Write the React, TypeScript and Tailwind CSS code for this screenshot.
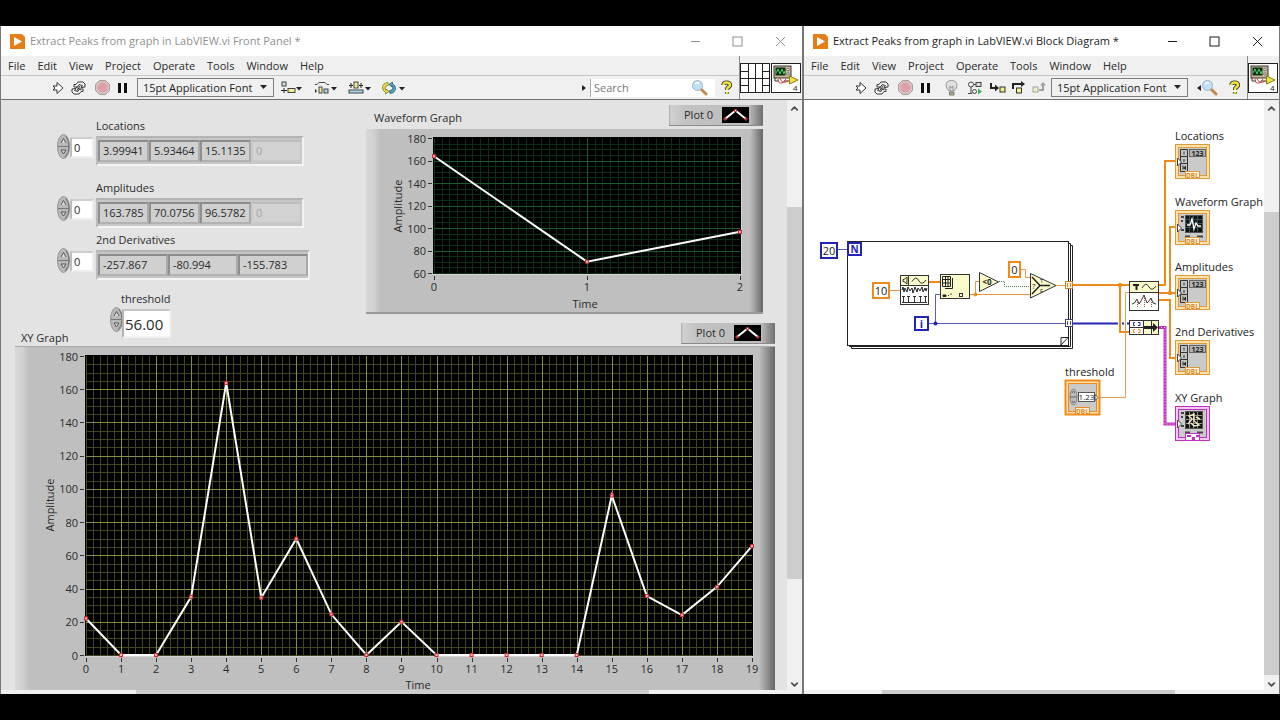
import { useState } from 'react'
import type { ReactNode } from 'react'
import { ChevronDown, ChevronUp } from 'lucide-react'

const MENU_ITEMS = ['File', 'Edit', 'View', 'Project', 'Operate', 'Tools', 'Window', 'Help']

const XY_VALUES = [22, 0, 0, 35, 163.8, 34.5, 70, 24.5, 0, 20, 0, 0, 0, 0, 0, 96, 35.5, 24, 41, 65.5]
const WAVE_VALUES = [163.785, 70.0756, 96.5782]

/* ---------- window chrome ---------- */

function LabviewLogo() {
  return (
    <svg width="15" height="15" viewBox="0 0 15 15" aria-hidden="true">
      <path d="M0 0H12L15 3V15H0Z" fill="#e67e17" />
      <path d="M4 3L12 7.5L4 12Z" fill="#fff" />
    </svg>
  )
}

function TitleBar({ title, active }: { title: string; active: boolean }) {
  return (
    <div
      className={`flex h-[30px] shrink-0 items-center bg-white pl-[9px] ${active ? 'text-[#1c1c1c]' : 'text-[#8f8f8f]'}`}
    >
      <LabviewLogo />
      <h1 className="ml-[5px] flex-1 truncate">{title}</h1>
      <button type="button" aria-label="Minimize" className="flex w-[42px] justify-center">
        <svg width="11" height="11" viewBox="0 0 11 11" stroke="currentColor">
          <path d="M1 5.5H10" />
        </svg>
      </button>
      <button type="button" aria-label="Maximize" className="flex w-[42px] justify-center">
        <svg width="11" height="11" viewBox="0 0 11 11" stroke="currentColor" fill="none">
          <rect x="1" y="1" width="9" height="9" />
        </svg>
      </button>
      <button type="button" aria-label="Close" className="flex w-[44px] justify-center">
        <svg width="11" height="11" viewBox="0 0 11 11" stroke="currentColor">
          <path d="M1 1L10 10M10 1L1 10" />
        </svg>
      </button>
    </div>
  )
}

function MenuBar() {
  return (
    <nav className="flex h-5 items-center gap-3 border-b border-[#c6c6c6] pl-[7px]">
      {MENU_ITEMS.map((item) => (
        <button key={item} type="button">
          {item}
        </button>
      ))}
    </nav>
  )
}

interface ToolProps {
  label: string
  className: string
  children: ReactNode
}

function Tool({ label, className, children }: ToolProps) {
  return (
    <button type="button" aria-label={label} className={`flex h-full shrink-0 items-center justify-center ${className}`}>
      {children}
    </button>
  )
}

function RunTools() {
  return (
    <>
      <Tool label="Run" className="ml-[47px] w-5">
        <svg width="12" height="14" viewBox="0 0 12 14" fill="#fff" stroke="#333">
          <path d="M1 5H5V1.500L11 7L5 12.500V9H1L3 7Z" />
        </svg>
      </Tool>
      <Tool label="Run continuously" className="w-5">
        <svg width="15" height="14" viewBox="0 0 15 14" fill="#fff" stroke="#333">
          <path d="M3 6V3.500H5L7 1H12L14 3V6L10 6.500L11.500 4.500L8 3.500L6.500 6Z" />
          <path d="M12 8V10.500H10L8 13H3L1 11V8L5 7.500L3.500 9.500L7 10.500L8.500 8Z" />
          <path d="M5 6L10 9M9 5L6 9.500" />
        </svg>
      </Tool>
      <Tool label="Abort execution" className="w-7">
        <svg width="15" height="15" viewBox="0 0 15 15">
          <path d="M4.500 .5H10.500L14.500 4.500V10.500L10.500 14.500H4.500L.5 10.500V4.500Z" fill="#d3c4c4" stroke="#a89c9c" />
          <circle cx="7.500" cy="7.500" r="5" fill="#df9fa4" />
        </svg>
      </Tool>
      <Tool label="Pause" className="w-3">
        <svg width="9" height="10" viewBox="0 0 9 10">
          <path d="M0 0H3V10H0ZM6 0H9V10H6Z" fill="#111" />
        </svg>
      </Tool>
    </>
  )
}

function FontSelect({ className }: { className: string }) {
  return (
    <div className={`relative h-[19px] w-[137px] shrink-0 ${className}`}>
      <select
        aria-label="Text settings"
        className="block h-full w-full appearance-none border border-[#7d7d7d] bg-[#f0f0f0] pl-[5px] text-[#222]"
      >
        <option>15pt Application Font</option>
      </select>
      <svg className="pointer-events-none absolute top-[7px] right-[7px]" width="7" height="4" viewBox="0 0 7 4">
        <path d="M0 0H7L3.500 4Z" fill="#222" />
      </svg>
    </div>
  )
}

function Caret({ x }: { x: number }) {
  return <path d={`M${x} 6H${x + 6}L${x + 3} 9.500Z`} fill="#222" />
}

function ArrangeTools() {
  return (
    <>
      <Tool label="Align objects" className="w-[34px]">
        <svg width="23" height="14" viewBox="0 0 23 14">
          <rect x="2" y="1" width="4" height="4" fill="#cfe3e8" stroke="#444" />
          <path d="M4 7V12M1 9.500H7" stroke="#222" />
          <rect x="8" y="7.500" width="7" height="4" fill="#f4ee8c" stroke="#444" />
          <Caret x={16} />
        </svg>
      </Tool>
      <Tool label="Distribute objects" className="w-[34px]">
        <svg width="23" height="14" viewBox="0 0 23 14">
          <path d="M1 3.500H3L5 1.500H11L13 3.500H15" fill="none" stroke="#444" />
          <path d="M1 8L3 10L1 12Z" fill="#222" />
          <rect x="5" y="6" width="3" height="6" fill="#f4ee8c" stroke="#444" />
          <rect x="10" y="8" width="4" height="4" fill="#a9d8e8" stroke="#444" />
          <Caret x={17} />
        </svg>
      </Tool>
      <Tool label="Resize objects" className="w-[34px]">
        <svg width="23" height="14" viewBox="0 0 23 14">
          <path d="M1 4.500H5M11 4.500H15M3 2V7M13 2V7" stroke="#222" />
          <rect x="6" y="1" width="4" height="6" fill="#f4ee8c" stroke="#444" />
          <rect x="1" y="9" width="14" height="3" fill="#a9d8e8" stroke="#444" />
          <Caret x={17} />
        </svg>
      </Tool>
      <Tool label="Reorder" className="w-[34px]">
        <svg width="24" height="14" viewBox="0 0 24 14">
          <path
            d="M7 1.500L3.500 2.500L1.500 5.500L2 9L4.500 11.500V13L8 10.500L5 8V9.200L4 7L5.200 5L7.500 4.200Z"
            fill="#f0e040"
            stroke="#7a7420"
            strokeWidth=".8"
          />
          <path
            d="M9 12.500L12.500 11.500L14.500 8.500L14 5L11.500 2.500V1L8 3.500L11 6V4.800L12 7L10.800 9L8.500 9.800Z"
            fill="#4aa8c8"
            stroke="#245a70"
            strokeWidth=".8"
          />
          <Caret x={18} />
        </svg>
      </Tool>
    </>
  )
}

function Magnifier() {
  return (
    <svg width="17" height="17" viewBox="0 0 17 17" aria-hidden="true">
      <path d="M10 10L15 15" stroke="#c48a48" strokeWidth="3" strokeLinecap="round" />
      <circle cx="6.500" cy="6.500" r="5" fill="#bfe0f5" stroke="#9fb4c4" />
      <path d="M4 5Q5.500 3 8 4" stroke="#fff" strokeWidth="1.500" fill="none" />
    </svg>
  )
}

function HelpTool() {
  return (
    <Tool label="Show context help" className="w-6">
      <svg width="12" height="15" viewBox="0 0 12 15">
        <path
          d="M2.500 5Q2.500 2.500 5.500 2.500Q9 2.500 9 5Q9 6.500 7 7.500Q6 8.200 6 10M6 12V13.500"
          fill="none"
          stroke="#333"
          strokeWidth="4.200"
        />
        <path
          d="M2.500 5Q2.500 2.500 5.500 2.500Q9 2.500 9 5Q9 6.500 7 7.500Q6 8.200 6 10M6 12V13.500"
          fill="none"
          stroke="#f2e632"
          strokeWidth="2.600"
        />
      </svg>
    </Tool>
  )
}

function ConnectorPane() {
  return (
    <svg width="30" height="30" viewBox="0 0 30 30" fill="#fff" stroke="#222" aria-hidden="true">
      <rect x=".5" y=".5" width="29" height="29" />
      <path d="M8.500 0V30M15.500 0V30M22.500 0V30M0 15.500H30" />
      <path d="M0 8.500H8M0 22.500H8M22 8.500H30M22 22.500H30" />
    </svg>
  )
}

function ViIcon() {
  return (
    <svg width="30" height="30" viewBox="0 0 30 30" aria-hidden="true">
      <rect x=".5" y=".5" width="29" height="29" fill="#fff" stroke="#222" />
      <rect x="3" y="3" width="17" height="12" fill="#c9b896" stroke="#333" />
      <rect x="4.500" y="4.500" width="10" height="8" fill="#103018" />
      <path d="M5 10L7 6L9 11L11 6L13 11L14 8" stroke="#4fd06a" fill="none" />
      <circle cx="17" cy="6.500" r="1.200" fill="#fff" stroke="#333" strokeWidth=".6" />
      <circle cx="17" cy="11" r="1.200" fill="#fff" stroke="#333" strokeWidth=".6" />
      <path d="M4 15V18H8M13 18H18" stroke="#333" fill="none" />
      <path d="M7 16Q7 21 11 20Q14 18 15 16M9 15Q11 22 17 18" stroke="#c8423c" fill="none" />
      <path d="M18.500 13L27 17L18.500 21Z" fill="#f3e33a" stroke="#8a7a14" />
      <text x="22" y="28" fontSize="8" fill="#222">
        4
      </text>
    </svg>
  )
}

function ToolHeader({ tools, icons }: { tools: ReactNode; icons: ReactNode }) {
  return (
    <div className="flex shrink-0 border-b border-[#6f6f6f] bg-[#f0f0f0]">
      <div className="min-w-0 flex-1">
        <MenuBar />
        <div className="flex h-[23px] items-center">{tools}</div>
      </div>
      <div className="flex items-center gap-px border-l border-[#8a8a8a] pr-px">{icons}</div>
    </div>
  )
}

interface ScrollAreaProps {
  children: ReactNode
  canvasClass: string
  before: string
  thumb: string
  after: string
  hBefore: string
  hThumb: string
  hAfter: string
}

function ScrollArea({ children, canvasClass, before, thumb, after, hBefore, hThumb, hAfter }: ScrollAreaProps) {
  return (
    <>
      <div className="flex min-h-0 flex-1">
        <div className={`min-w-0 flex-1 overflow-hidden ${canvasClass}`}>{children}</div>
        <div className="flex w-[15px] shrink-0 flex-col bg-[#f0f0f0] text-[#505050]">
          <div className={`flex basis-0 justify-center pt-[3px] ${before}`}>
            <ChevronUp size={11} strokeWidth={4} />
          </div>
          <div className={`basis-0 bg-[#cdcdcd] ${thumb}`} />
          <div className={`flex basis-0 items-end justify-center ${after}`}>
            <ChevronDown size={11} strokeWidth={4} />
          </div>
        </div>
      </div>
      <div className="flex h-1 shrink-0 bg-[#f0f0f0]">
        <div className={hBefore} />
        <div className={`bg-[#cdcdcd] ${hThumb}`} />
        <div className={hAfter} />
      </div>
    </>
  )
}

/* ---------- front panel ---------- */

function Spinner({ label }: { label: string }) {
  return (
    <button type="button" aria-label={label} className="shrink-0">
      <svg width="13" height="25" viewBox="0 0 13 25">
        <ellipse cx="6.500" cy="12.500" rx="6" ry="12" fill="#b9b9b9" stroke="#959595" />
        <path d="M9 2Q12 7 12 12.500Q12 19 8 23" stroke="#6f6f6f" fill="none" />
        <path d="M1 12.500H12" stroke="#777" />
        <path d="M4 9L6.500 4.500L9 9M4 16H9L6.500 20Z" stroke="#555" fill="#ddd" />
      </svg>
    </button>
  )
}

interface ArrayIndicatorProps {
  name: string
  values: string[]
  className: string
  cellClass: string
}

function ArrayIndicator({ name, values, className, cellClass }: ArrayIndicatorProps) {
  const [index, setIndex] = useState('0')
  return (
    <div className={className}>
      <h2 className="ml-[39px] leading-4">{name}</h2>
      <div className="flex h-8 items-start">
        <Spinner label={`${name} index step`} />
        <input
          aria-label={`${name} index`}
          value={index}
          onChange={(e) => setIndex(e.target.value)}
          className="mt-[3px] h-[21px] w-6 border-2 border-t-[#cfcfcf] border-r-[#eee] border-b-[#eee] border-l-[#bdbdbd] bg-white pl-[2px]"
        />
        <div className="mt-[2px] ml-[2px] flex h-[30px] border-2 border-t-[#b4b4b4] border-r-[#f2f2f2] border-b-[#f4f4f4] border-l-[#bcbcbc] bg-[#c6c6c6] py-[2px]">
          {values.map((value, i) => (
            <output
              key={i}
              className={`flex items-center border-2 pl-[3px] ${cellClass} ${
                value === '0'
                  ? 'border-[#c9c9c9] border-t-[#bcbcbc] bg-[#d2d2d2] text-[#a5a5a5]'
                  : 'border-t-[#8b8b8b] border-r-[#aaa] border-b-[#b2b2b2] border-l-[#8f8f8f] bg-[#d0d0d0]'
              }`}
            >
              {value}
            </output>
          ))}
        </div>
      </div>
    </div>
  )
}

function ThresholdControl() {
  const [value, setValue] = useState('56.00')
  return (
    <div className="mb-[8px]">
      <label htmlFor="threshold" className="ml-[11px] block leading-4">
        threshold
      </label>
      <div className="flex items-start">
        <Spinner label="threshold step" />
        <input
          id="threshold"
          value={value}
          onChange={(e) => setValue(e.target.value)}
          className="mt-[2px] -ml-px h-[29px] w-[49px] border-2 border-t-[#c4c4c4] border-r-[#f2f2f2] border-b-[#f2f2f2] border-l-[#b4b4b4] bg-white pl-px text-[15px]"
        />
      </div>
    </div>
  )
}

function PlotLegend({ className }: { className: string }) {
  return (
    <div
      className={`flex h-[21px] w-[94px] shrink-0 items-center border-b border-[#8a8a8a] bg-[linear-gradient(to_right,#a8a8a8_0,#d0d0d0_2px,#c2c2c2_16px,#bcbcbc_80px,#6e6e6e_100%)] pl-[15px] ${className}`}
    >
      <span className="w-[38px]">Plot 0</span>
      <svg width="27" height="16" viewBox="0 0 27 16" aria-hidden="true">
        <rect width="27" height="16" fill="#000" />
        <path d="M3 12L13.500 3.500L24 12" stroke="#fff" strokeWidth="2" fill="none" />
        <path d="M2 11h2v2h-2zM12.500 2.500h2v2h-2zM23 11h2v2h-2z" stroke="#c83038" fill="none" />
      </svg>
    </div>
  )
}

interface GraphProps {
  width: number
  height: number
  plot: { x: number; y: number; w: number; h: number }
  values: number[]
  yMin: number
  yMax: number
  xMinor: number
  majorColor: string
  minorColor: string
  yTitle: { x: number; y: number }
  xTitle: { x: number; y: number }
}

function Graph({ width, height, plot, values, yMin, yMax, xMinor, majorColor, minorColor, yTitle, xTitle }: GraphProps) {
  const xMax = values.length - 1
  const px = (v: number) => plot.x + (v / xMax) * plot.w
  const py = (v: number) => plot.y + plot.h - ((v - yMin) / (yMax - yMin)) * plot.h
  const snap = (v: number) => Math.round(v) + 0.5

  const xTicks = values.map((_, i) => i)
  const yTicks = Array.from({ length: (yMax - yMin) / 20 + 1 }, (_, i) => yMin + i * 20)
  const xLines = Array.from({ length: xMax * xMinor }, (_, i) => i / xMinor)
  const yLines = Array.from({ length: (yMax - yMin) / 5 }, (_, i) => yMin + i * 5)

  return (
    <svg viewBox={`0 0 ${width} ${height}`} className="block w-full" fontSize="11" fill="#2b2b2b">
      <rect x={plot.x - 1} y={plot.y - 1} width={plot.w + 2} height={plot.h + 2} fill="#000" />
      {xLines.map((v) => (
        <path key={v} d={`M${snap(px(v))} ${plot.y}V${plot.y + plot.h}`} stroke={minorColor} />
      ))}
      {yLines.map((v) => (
        <path key={v} d={`M${plot.x} ${snap(py(v))}H${plot.x + plot.w}`} stroke={minorColor} />
      ))}
      {xTicks.slice(1, -1).map((v) => (
        <path key={v} d={`M${snap(px(v))} ${plot.y}V${plot.y + plot.h}`} stroke={majorColor} />
      ))}
      {yTicks.slice(1, -1).map((v) => (
        <path key={v} d={`M${plot.x} ${snap(py(v))}H${plot.x + plot.w}`} stroke={majorColor} />
      ))}
      <path
        d={`M${plot.x - 1} ${plot.y + plot.h + 1.5}H${plot.x + plot.w + 1.5}V${plot.y}`}
        stroke="#d4d4d4"
        fill="none"
      />

      <polyline
        points={values.map((v, i) => `${px(i)},${py(v)}`).join(' ')}
        fill="none"
        stroke="#fff"
        strokeWidth="2"
      />
      {values.map((v, i) => (
        <rect key={i} x={px(i) - 1.5} y={py(v) - 1.5} width="3" height="3" fill="#f0b8b8" stroke="#cc2a30" />
      ))}

      {yTicks.map((v) => (
        <g key={v}>
          <path d={`M${plot.x - 6} ${snap(py(v))}h4`} stroke="#333" />
          <text x={plot.x - 8} y={py(v) + 4.5} textAnchor="end">
            {v}
          </text>
        </g>
      ))}
      {xTicks.map((v) => (
        <g key={v}>
          <path d={`M${snap(px(v))} ${plot.y + plot.h + 3}v4`} stroke="#333" />
          <text x={px(v)} y={plot.y + plot.h + 18} textAnchor="middle">
            {v}
          </text>
        </g>
      ))}
      <text transform={`translate(${yTitle.x} ${yTitle.y}) rotate(-90)`} textAnchor="middle">
        Amplitude
      </text>
      <text x={xTitle.x} y={xTitle.y} textAnchor="middle">
        Time
      </text>
    </svg>
  )
}

function FrontPanel() {
  return (
    <section className="flex min-h-0 min-w-0 flex-col border-r-2 border-l border-[#777] bg-white">
      <TitleBar title="Extract Peaks from graph in LabVIEW.vi Front Panel *" active={false} />
      <ToolHeader
        tools={
          <>
            <RunTools />
            <FontSelect className="ml-[9px]" />
            <ArrangeTools />
            <div className="ml-auto flex items-center">
              <svg width="5" height="6" viewBox="0 0 5 6" aria-hidden="true">
                <path d="M0 0L4 3L0 6Z" fill="#222" />
              </svg>
              <div className="ml-[3px] flex h-[18px] items-center border-l border-[#aaa] bg-white pr-[7px]">
                <input
                  aria-label="Search"
                  placeholder="Search"
                  className="w-[100px] pl-[3px] outline-none placeholder:text-[#777]"
                />
                <Magnifier />
              </div>
              <HelpTool />
            </div>
          </>
        }
        icons={
          <>
            <ConnectorPane />
            <ViIcon />
          </>
        }
      />
      <ScrollArea
        canvasClass="bg-[#e3e3e3]"
        before="grow-[105]"
        thumb="grow-[373]"
        after="grow-[112]"
        hBefore="grow-[135]"
        hThumb="grow-[513]"
        hAfter="grow-[153]"
      >
        <div className="flex justify-between">
          <div className="flex flex-col justify-between">
            <div className="pt-[18px] pl-14">
              <ArrayIndicator
                name="Locations"
                className="mb-[14px]"
                cellClass="w-[51px]"
                values={['3.99941', '5.93464', '15.1135', '0']}
              />
              <ArrayIndicator
                name="Amplitudes"
                className="mb-[4px]"
                cellClass="w-[51px]"
                values={['163.785', '70.0756', '96.5782', '0']}
              />
              <ArrayIndicator
                name="2nd Derivatives"
                className=""
                cellClass="w-[70px]"
                values={['-257.867', '-80.994', '-155.783']}
              />
            </div>
            <div className="flex items-end pl-5">
              <h2 className="w-[89px] leading-4">XY Graph</h2>
              <ThresholdControl />
            </div>
          </div>
          <div className="mr-3 w-[409px] pt-[5px]">
            <div className="mr-3 flex items-end justify-between pl-2">
              <h2 className="leading-4">Waveform Graph</h2>
              <PlotLegend className="" />
            </div>
            <div className="mt-[3px] mr-3 border-b-2 border-[#999] bg-[linear-gradient(to_right,#d8d8d8_0,#d0d0d0_8px,#bfbfbf_14px,#bfbfbf_384px,#666_100%)]">
              <Graph
                width={397}
                height={183}
                plot={{ x: 68, y: 9, w: 306, h: 135 }}
                values={WAVE_VALUES}
                yMin={60}
                yMax={180}
                xMinor={20}
                majorColor="#1d5c28"
                minorColor="#0d2e16"
                yTitle={{ x: 36, y: 77 }}
                xTitle={{ x: 219, y: 179 }}
              />
            </div>
            <PlotLegend className="mt-[9px] mb-[2px] ml-auto" />
          </div>
        </div>
        <div className="mr-3 ml-[14px] border-t border-[#aaa] bg-[linear-gradient(to_right,#d8d8d8_0,#d0d0d0_8px,#bfbfbf_14px,#bfbfbf_744px,#666_100%)]">
          <Graph
            width={760}
            height={350}
            plot={{ x: 71, y: 9, w: 666, h: 299 }}
            values={XY_VALUES}
            yMin={0}
            yMax={180}
            xMinor={5}
            majorColor="#848f48"
            minorColor="#41461f"
            yTitle={{ x: 39, y: 158 }}
            xTitle={{ x: 403, y: 342 }}
          />
        </div>
      </ScrollArea>
    </section>
  )
}

/* ---------- block diagram ---------- */

const ORANGE = '#f08a1c'
const BLUE = '#2424b4'
const PINK = '#c030c0'

function Constant({ x, y, w, color, text }: { x: number; y: number; w: number; color: string; text: string }) {
  return (
    <g>
      <rect x={x} y={y} width={w} height="15" fill="#fff" stroke={color} strokeWidth="2" />
      <text x={x + w / 2} y={y + 11.5} textAnchor="middle">
        {text}
      </text>
    </g>
  )
}

interface TerminalProps {
  x: number
  y: number
  label: string
  kind: 'array' | 'graph' | 'xy' | 'control'
}

function Terminal({ x, y, label, kind }: TerminalProps) {
  const color = kind === 'xy' ? PINK : kind === 'control' ? ORANGE : '#dc9a3c'
  const inner = kind === 'xy' ? '#f4c8f4' : '#ffe2a8'
  return (
    <g>
      <text x={x} y={y - 4}>
        {label}
      </text>
      <g transform={`translate(${x} ${y})`}>
        <rect x=".5" y=".5" width="34" height="34" fill={inner} stroke={color} strokeWidth={kind === 'control' ? 2 : 1} />
        <rect x="3.500" y="3.500" width="28" height="28" fill="#cacaca" stroke={color} />
        {kind === 'array' && (
          <>
            <path d="M5.500 5.500h7v7h-7zM5.500 12.500h7v7h-7zM5.500 19.500h7v8h-7z" fill="#c4c4c4" stroke="#333" />
            <path d="M9 7.500v3M9 15v3M8 21.500v4M11 22L8.500 24L11 25.500" stroke="#333" />
            <rect x="14.500" y="5.500" width="16" height="7" fill="#b4b4b4" stroke="#666" />
            <text x="22.500" y="12" fontSize="7" fontWeight="700" textAnchor="middle">
              123
            </text>
          </>
        )}
        {(kind === 'graph' || kind === 'xy') && (
          <>
            <rect x="10.500" y="5.500" width="17" height="17" fill="#101410" stroke="#555" />
            <path
              d="M14.500 6V22M18.500 6V22M22.500 6V22M11 9.500H27M11 13.500H27M11 17.500H27"
              stroke={kind === 'xy' ? '#9a927c' : '#38505a'}
            />
            <path d="M6 7h3M7 10v2M6 20h3M10 26.500h5M22 26.500h6" stroke="#444" strokeWidth="2" />
            {kind === 'graph' ? (
              <path d="M12 15H15L17 9L19 19L21 13L23 16H26" stroke="#fff" fill="none" strokeWidth="1.300" />
            ) : (
              <path
                d="M13 18L17 13L14 10L19 8V15L24 19L19 20L16 17M21 11L25 13"
                stroke="#f0e6c8"
                fill="none"
                strokeWidth="1.500"
              />
            )}
          </>
        )}
        {kind === 'control' ? (
          <>
            <ellipse cx="8.500" cy="17" rx="3.500" ry="8" fill="#bbb" stroke="#888" />
            <path d="M5 17H12M7 13L8.500 11L10 13M7 21L8.500 23L10 21" stroke="#666" fill="none" />
            <rect x="13.500" y="12.500" width="16" height="9" fill="#fff" stroke="#555" />
            <text x="21.500" y="20" fontSize="8" textAnchor="middle">
              1.23
            </text>
            <path d="M30 14.500L33 17.500L30 20.500Z" fill="#fff" stroke="#444" />
          </>
        ) : (
          <path d="M2.500 14L6.500 18L2.500 22Z" fill="#fff" stroke="#444" />
        )}
        <rect x="10.500" y="27.500" width="14" height="7" fill={kind === 'xy' ? '#fff' : '#fff4dc'} stroke={color} />
        {kind === 'xy' ? (
          <path d="M12 29h4v2h-4zM17 31h3v3h-3zM21 29h3v2h-3z" fill={PINK} />
        ) : (
          <text x="17.500" y="33.500" fontSize="6.500" fontWeight="700" fill="#e08a24" textAnchor="middle">
            DBL
          </text>
        )}
      </g>
    </g>
  )
}

function Wires() {
  return (
    <g fill="none">
      <path d="M837 249.500H847M928 323.500H1066M935.500 323.500V294.500H940" stroke="#5a5ab8" />
      <path d="M889 290.500H900M969 294.500H1030M975.500 294.500V281.500H979M1020 269.500H1025.500V277.500H1030M1056 285.500H1066" stroke="#e8964a" />
      <path d="M929 282H940" stroke={ORANGE} strokeWidth="2" />
      <path d="M999 281.500H1004.500V286.500H1030" stroke="#3f7a4a" strokeDasharray="1 1" />
      <circle cx="975.500" cy="294.500" r="2" fill={ORANGE} />
      <circle cx="935.500" cy="323.500" r="2" fill={BLUE} />

      <path d="M1072 285H1130M1120 285V332H1130" stroke={ORANGE} strokeWidth="2" />
      <circle cx="1120" cy="285" r="2.200" fill={ORANGE} />
      <path d="M1100 397.500H1125.500V292.500H1130" stroke="#e0a050" />
      <path d="M1072 323.500H1118M1122 323.500H1124M1127 323.500H1130" stroke={BLUE} strokeWidth="2" />
      <path
        d="M1158 285H1165V161H1177M1158 293H1177M1170 293V227H1177M1158 300H1170V358H1177"
        stroke={ORANGE}
        strokeWidth="2"
      />
      <circle cx="1170" cy="293" r="2.200" fill={ORANGE} />
      <path d="M1158 327.500H1165V424H1177" stroke={PINK} strokeWidth="3" />
      <path d="M1158 327.500H1165V424H1177" stroke="#f8d8f8" strokeDasharray="1 2" />
    </g>
  )
}

function DiagramCanvas() {
  return (
    <svg
      width="460"
      height="590"
      viewBox="804 100 460 590"
      className="block"
      fontSize="11"
      fill="#222"
      role="img"
      aria-label="Block diagram"
    >
      {/* for loop, drawn as a stack of pages */}
      <g fill="#fff" stroke="#222">
        <path d="M851.500 346.500V348.500H1072.500V245.500H1070" />
        <path d="M849.500 345V346.500H1070.500V243.500H1068.500" />
        <rect x="847.500" y="241.500" width="221" height="104" />
        <path d="M1061 345L1068 337.500H1061Z" />
      </g>

      <Wires />

      <Constant x={821} y={243} w={16} color={BLUE} text="20" />
      <rect x="848" y="243" width="13" height="12" fill="#fff" stroke={BLUE} strokeWidth="2" />
      <text x="854.5" y="252.5" fontSize="10" fontWeight="700" fill={BLUE} textAnchor="middle">
        N
      </text>
      <Constant x={873} y={283} w={16} color={ORANGE} text="10" />
      <rect x="915" y="317" width="13" height="13" fill="#fff" stroke={BLUE} strokeWidth="2" />
      <text x="921.5" y="328" fontWeight="700" fill={BLUE} textAnchor="middle">
        i
      </text>
      <Constant x={1009} y={262} w={11} color={ORANGE} text="0" />

      {/* signal generator */}
      <rect x="900.500" y="275.500" width="28" height="29" fill="#fff" stroke="#333" />
      <rect x="900.500" y="275.500" width="28" height="10" fill="#fbfacb" stroke="#333" />
      <path d="M908.500 276V285M903 279.500V281.500H904L907 284V277L904 279.500ZM912 281.500Q916 275 919 281Q922 286 926 280" fill="none" stroke="#333" />
      <path
        d="M902 290L903 287L904 292L905 288L907 292L908 287L910 291L912 288L913 293L915 287L917 292L918 288L920 291L922 287L923 292L925 288L926 291L927 288"
        fill="none"
        stroke="#222"
      />
      <path d="M902 302.500H927M903.500 302V296M908.500 302V296M914.500 302V296M920.500 302V296M925.500 302V296M902 296.500H905M907 296.500H910M913 296.500H916M919 296.500H922M924 296.500H927" stroke="#333" fill="none" />

      {/* index array */}
      <rect x="940.500" y="274.500" width="29" height="24" fill="#fbfacb" stroke="#333" />
      <path d="M942.500 276.500H950.500V286.500H942.500ZM945.500 276V287M948 276V287M942 279.500H951M942 283H951M952.500 278V288.500H945" fill="none" stroke="#222" />
      <path d="M943 295H946V296.500H943ZM948 295.500H949M951 295V293.500" fill="#222" stroke="#222" />
      <rect x="959.500" y="293.500" width="3" height="3" fill="#fff" stroke="#333" />

      {/* less than zero */}
      <path d="M979.500 272.500L998.500 282L979.500 291.500Z" fill="#fbfacb" stroke="#333" />
      <text x="987" y="285" fontSize="8" fontWeight="700" textAnchor="middle">
        &lt;0
      </text>

      {/* select */}
      <path d="M1030.500 273.500L1056 285.500L1030.500 298Z" fill="#fbfacb" stroke="#333" />
      <path d="M1032 277L1040 285.500H1050M1032 294L1040 285.500" stroke="#222" strokeWidth="1.500" fill="none" />
      <text x="1032" y="289" fontSize="8">
        ?
      </text>
      <text x="1040" y="283" fontSize="6">
        T
      </text>
      <text x="1040" y="293" fontSize="6">
        F
      </text>

      <rect x="1065.500" y="281.500" width="7" height="7" fill="#fff0d0" stroke="#c08030" />
      <path d="M1068 283.500H1067.500V286.500H1068M1070 283.500H1070.500V286.500H1070" stroke="#c08030" fill="none" />
      <rect x="1065.500" y="319.500" width="7" height="7" fill="#fff" stroke="#444470" />
      <path d="M1068 321.500H1067.500V324.500H1068M1070 321.500H1070.500V324.500H1070" stroke="#444470" fill="none" />

      {/* peak detector */}
      <rect x="1129.500" y="281.500" width="29" height="29" fill="#fff" stroke="#333" />
      <rect x="1129.500" y="281.500" width="29" height="11" fill="#fbfacb" stroke="#333" />
      <path d="M1133 285H1139M1136.500 284V290" stroke="#222" strokeWidth="2" />
      <path d="M1142 288Q1146 281 1149 287Q1152 292 1156 286" fill="none" stroke="#333" />
      <path d="M1132 304L1134.500 303L1137 299L1139 304L1141 301L1144 295L1147 303L1149 301L1151 298L1153 303L1156 304" fill="none" stroke="#333" />
      <path d="M1137.500 300V308M1144.500 298V308M1151.500 300V308" stroke="#b04848" strokeDasharray="1 1" />

      {/* bundle */}
      <rect x="1129.500" y="320.500" width="29" height="14" fill="#fbfacb" stroke="#333" />
      <rect x="1130" y="321" width="13" height="13" fill="#fff" />
      <path d="M1143.500 320V335M1130 327.500H1143M1151.500 320V335" stroke="#333" />
      <path d="M1135 322.500H1133.500V325.500H1135M1138 322.500H1140V325.500H1138" stroke={BLUE} fill="none" />
      <path d="M1135 329.500H1133.500V332.500H1135M1138 329.500H1140V332.500H1138" stroke={ORANGE} fill="none" />
      <path d="M1144 326H1153V323L1158 327.500L1153 332V329H1144Z" fill="#222" />

      <Terminal x={1175} y={144} label="Locations" kind="array" />
      <Terminal x={1175} y={210} label="Waveform Graph" kind="graph" />
      <Terminal x={1175} y={275} label="Amplitudes" kind="array" />
      <Terminal x={1175} y={340} label="2nd Derivatives" kind="array" />
      <Terminal x={1175} y={406} label="XY Graph" kind="xy" />
      <Terminal x={1065} y={380} label="threshold" kind="control" />
    </svg>
  )
}

function DebugTools() {
  return (
    <>
      <Tool label="Highlight execution" className="ml-2 w-6">
        <svg width="13" height="16" viewBox="0 0 13 16">
          <path d="M4 11Q1 8 1 5.500Q1 .5 6.500 .5Q12 .5 12 5.500Q12 8 9 11Z" fill="#dedede" stroke="#999" />
          <path d="M5 11V6L6.500 8L8 6V11" stroke="#999" fill="none" />
          <path d="M4.500 12H9V15H4.500Z" fill="#b8b070" stroke="#777" />
        </svg>
      </Tool>
      <Tool label="Retain wire values" className="w-6">
        <svg width="16" height="14" viewBox="0 0 16 14" fill="none" stroke="#444">
          <circle cx="4" cy="3.500" r="2.500" />
          <path d="M4 6V12M1 12.500H5M7 3.500H9" />
          <rect x="9" y="1.500" width="5" height="4" fill="#ddd" />
          <circle cx="7.500" cy="10.500" r="2" />
          <path d="M11 7.500L15 10.500L11 13.500Z" fill="#3fae4c" stroke="none" />
        </svg>
      </Tool>
      <Tool label="Step into" className="w-[22px]">
        <svg width="16" height="12" viewBox="0 0 16 12">
          <path d="M1 1V6H5" stroke="#222" strokeWidth="2" fill="none" />
          <path d="M5 2.500L9 6L5 9.500Z" fill="#222" />
          <rect x="10" y="5" width="5" height="5" fill="#f4ee8c" stroke="#333" />
        </svg>
      </Tool>
      <Tool label="Step over" className="w-5">
        <svg width="14" height="13" viewBox="0 0 14 13">
          <path d="M1 8V3H9" stroke="#222" strokeWidth="2" fill="none" />
          <path d="M9 0L13 3L9 6Z" fill="#222" />
          <rect x="4.500" y="7" width="5" height="5" fill="#f4ee8c" stroke="#333" />
        </svg>
      </Tool>
      <Tool label="Step out" className="w-5">
        <svg width="14" height="13" viewBox="0 0 14 13" opacity=".5">
          <rect x="1" y="6" width="5" height="5" fill="#f4ee8c" stroke="#555" />
          <path d="M7 9H11V4" stroke="#555" strokeWidth="2" fill="none" />
          <path d="M8 4.500L11 1L14 4.500Z" fill="#555" />
        </svg>
      </Tool>
    </>
  )
}

function BlockDiagram() {
  return (
    <section className="flex min-h-0 min-w-0 flex-col border-r border-[#777] bg-white">
      <TitleBar title="Extract Peaks from graph in LabVIEW.vi Block Diagram *" active />
      <ToolHeader
        tools={
          <>
            <RunTools />
            <DebugTools />
            <FontSelect className="ml-[2px]" />
            <Tool label="Search" className="ml-auto w-6">
              <svg width="4" height="6" viewBox="0 0 4 6">
                <path d="M4 0L0 3L4 6Z" fill="#222" />
              </svg>
              <Magnifier />
            </Tool>
            <div className="ml-1 h-full">
              <HelpTool />
            </div>
          </>
        }
        icons={<ViIcon />}
      />
      <ScrollArea
        canvasClass="bg-white"
        before="grow-[110]"
        thumb="grow-[465]"
        after="grow-[15]"
        hBefore="grow-[78]"
        hThumb="grow-[293]"
        hAfter="grow-[104]"
      >
        <DiagramCanvas />
      </ScrollArea>
    </section>
  )
}

export default function App() {
  return (
    <main className="grid h-screen grid-cols-[804fr_476fr] grid-rows-[minmax(0,1fr)] bg-black py-[26px] font-['Open_Sans','Noto_Sans',sans-serif] text-[11px] leading-4 text-[#2b2b2b]">
      <FrontPanel />
      <BlockDiagram />
    </main>
  )
}
